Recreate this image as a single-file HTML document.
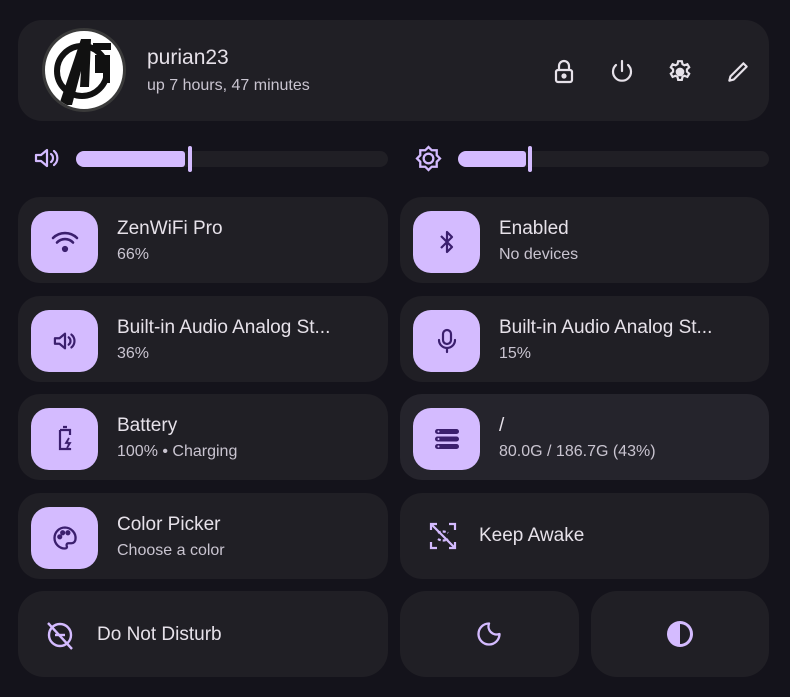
<!DOCTYPE html>
<html><head><meta charset="utf-8"><style>
*{box-sizing:border-box;margin:0;padding:0}
body{width:790px;height:697px;background:#14131b;font-family:"Liberation Sans",sans-serif;position:relative;overflow:hidden}
.card{position:absolute;background:#201f25;border-radius:22px}
.ib{position:absolute;left:13px;top:14px;width:67px;height:62px;background:#d4bbff;border-radius:18px;display:flex;align-items:center;justify-content:center}
.t{position:absolute;left:99px;top:21px;color:#e6e1e9;font-size:19px}
.s{position:absolute;left:99px;top:49px;color:#c9c4d0;font-size:16px}
svg{display:block}
.track{position:absolute;height:16px;background:#201f25;border-radius:8px}
.fill{position:absolute;height:16px;background:#d4bbff;border-radius:8px 3px 3px 8px}
.hd{position:absolute;width:4px;height:26px;background:#d4bbff;border-radius:2px}
</style></head><body>
<div class="card" style="left:18px;top:20px;width:751px;height:101px;border-radius:24px">
  <div style="position:absolute;left:24px;top:8px;width:84px;height:84px;border-radius:50%;background:#fff;border:3px solid #3a3a3a;overflow:hidden">
    <svg width="78" height="78" viewBox="0 0 78 78"><circle cx="37" cy="40" r="25" fill="none" stroke="#111" stroke-width="6"/><path d="M14 74 L36 8 L46 8 L44 56 L35 56 L36 40 L27 74Z" fill="#111"/><path d="M48 12h18v7h-18zM50 24h15v28h-7v-10h-8z" fill="#111"/></svg>
  </div>
  <div style="position:absolute;left:129px;top:26px;color:#e6e1e9;font-size:21px">purian23</div>
  <div style="position:absolute;left:129px;top:57px;color:#c9c4d0;font-size:16px">up 7 hours, 47 minutes</div>
  <svg style="position:absolute;left:535px;top:39px" width="22" height="26" viewBox="0 0 22 26" fill="none" stroke="#e6e1e9" stroke-width="2.2"><rect x="3" y="11" width="16" height="12" rx="2"/><path d="M6 11V7a5 5 0 0 1 10 0v4"/><circle cx="11" cy="17" r="1.5" fill="#e6e1e9"/></svg>
  <svg style="position:absolute;left:591px;top:39px" width="26" height="26" viewBox="0 0 26 26" fill="none" stroke="#e6e1e9" stroke-width="2.2" stroke-linecap="round"><path d="M13 2v10"/><path d="M7 6a9 9 0 1 0 12 0"/></svg>
  <svg style="position:absolute;left:649px;top:39px" width="26" height="26" viewBox="0 0 24 24" fill="none" stroke="#e6e1e9" stroke-width="2"><path d="M10.3 2h3.4l.6 2.8 1.8 1 2.7-1 1.7 2.9-2.1 1.9v2.1l2.1 1.9-1.7 2.9-2.7-1-1.8 1-.6 2.8h-3.4l-.6-2.8-1.8-1-2.7 1-1.7-2.9 2.1-1.9v-2.1L3.5 7.7l1.7-2.9 2.7 1 1.8-1z"/><circle cx="12" cy="12" r="3" fill="#e6e1e9"/></svg>
  <svg style="position:absolute;left:707px;top:39px" width="26" height="26" viewBox="0 0 24 24" fill="none" stroke="#e6e1e9" stroke-width="2" stroke-linejoin="round"><path d="M4 20l1-4L17 4l3 3L8 19z"/></svg>
</div>
<svg style="position:absolute;left:33px;top:146px" width="28" height="24" viewBox="0 0 28 24" fill="none" stroke="#d4bbff" stroke-width="2.2" stroke-linejoin="round" stroke-linecap="round"><path d="M3 9h5l6-5v16l-6-5H3z"/><path d="M18 8a5 5 0 0 1 0 8"/><path d="M21 5a9 9 0 0 1 0 14"/></svg>
<div class="track" style="left:76px;top:151px;width:312px"></div>
<div class="fill" style="left:76px;top:151px;width:109px"></div>
<div class="hd" style="left:188px;top:146px"></div>
<svg style="position:absolute;left:414px;top:144px" width="29" height="29" viewBox="0 0 24 24" fill="none" stroke="#d4bbff" stroke-width="1.9"><path d="M12 2.5l2.7 2.7h4.1v4.1L21.5 12l-2.7 2.7v4.1h-4.1L12 21.5l-2.7-2.7H5.2v-4.1L2.5 12l2.7-2.7V5.2h4.1z"/><circle cx="12" cy="12" r="4"/></svg>
<div class="track" style="left:458px;top:151px;width:311px"></div>
<div class="fill" style="left:458px;top:151px;width:68px"></div>
<div class="hd" style="left:528px;top:146px"></div>

<div class="card" style="left:18px;top:197px;width:370px;height:86px"><div class="ib"><svg width="28" height="24" viewBox="0 0 28 24" fill="none" stroke="#3b1f6e" stroke-width="2.6" stroke-linecap="round"><path d="M2 8a17 17 0 0 1 24 0"/><path d="M6 12.5a11 11 0 0 1 16 0"/><circle cx="14" cy="19" r="1.8" fill="#3b1f6e"/></svg></div><div class="t">ZenWiFi Pro</div><div class="s">66%</div></div>
<div class="card" style="left:400px;top:197px;width:369px;height:86px"><div class="ib"><svg width="20" height="28" viewBox="0 0 20 28" fill="none" stroke="#3b1f6e" stroke-width="2.2" stroke-linejoin="round"><path d="M4 8l11 11-5 5V4l5 5L4 20"/></svg></div><div class="t">Enabled</div><div class="s">No devices</div></div>

<div class="card" style="left:18px;top:296px;width:370px;height:86px"><div class="ib"><svg width="26" height="22" viewBox="0 0 28 24" fill="none" stroke="#3b1f6e" stroke-width="2.4" stroke-linejoin="round" stroke-linecap="round"><path d="M3 9h5l6-5v16l-6-5H3z"/><path d="M18 8a5 5 0 0 1 0 8"/><path d="M21 5a9 9 0 0 1 0 14"/></svg></div><div class="t">Built-in Audio Analog St...</div><div class="s">36%</div></div>
<div class="card" style="left:400px;top:296px;width:369px;height:86px"><div class="ib"><svg width="22" height="28" viewBox="0 0 22 28" fill="none" stroke="#3b1f6e" stroke-width="2.2" stroke-linecap="round"><rect x="7" y="3" width="8" height="14" rx="4"/><path d="M3 13a8 8 0 0 0 16 0M11 21v4"/></svg></div><div class="t">Built-in Audio Analog St...</div><div class="s">15%</div></div>

<div class="card" style="left:18px;top:394px;width:370px;height:86px"><div class="ib"><svg width="20" height="30" viewBox="0 0 20 30" fill="none" stroke="#3b1f6e" stroke-width="2.2"><path d="M8 3h4M5 6h10v5M15 24v1H5V6"/><path d="M14 14l-3 5h4l-3 5" stroke-width="1.8" fill="#3b1f6e"/></svg></div><div class="t">Battery</div><div class="s">100% • Charging</div></div>
<div class="card" style="left:400px;top:394px;width:369px;height:86px;background:#25242c"><div class="ib"><svg width="26" height="24" viewBox="0 0 26 24"><rect x="1" y="2" width="24" height="5" rx="2.5" fill="#3b1f6e"/><rect x="1" y="9.5" width="24" height="5" rx="2.5" fill="#3b1f6e"/><rect x="1" y="17" width="24" height="5" rx="2.5" fill="#3b1f6e"/><circle cx="4.5" cy="4.5" r="1" fill="#d4bbff"/><circle cx="4.5" cy="12" r="1" fill="#d4bbff"/><circle cx="4.5" cy="19.5" r="1" fill="#d4bbff"/></svg></div><div class="t">/</div><div class="s">80.0G / 186.7G (43%)</div></div>

<div class="card" style="left:18px;top:493px;width:370px;height:86px"><div class="ib"><svg width="28" height="28" viewBox="0 0 24 24" fill="none" stroke="#3b1f6e" stroke-width="2"><path d="M12 3a9 9 0 0 0 0 18c1.5 0 2-1 1.5-2s0-2.5 1.5-2.5h2.5A3.5 3.5 0 0 0 21 13 9.5 9 0 0 0 12 3z"/><circle cx="7.5" cy="11" r="1.2" fill="#3b1f6e"/><circle cx="10" cy="7.5" r="1.2" fill="#3b1f6e"/><circle cx="14.5" cy="7.5" r="1.2" fill="#3b1f6e"/></svg></div><div class="t">Color Picker</div><div class="s">Choose a color</div></div>
<div class="card" style="left:400px;top:493px;width:369px;height:86px"><svg style="position:absolute;left:28px;top:28px" width="30" height="30" viewBox="0 0 30 30" fill="none" stroke="#d4bbff" stroke-width="2.2"><path d="M3 9V3h6M21 3h6v6M27 21v6h-6M9 27H3v-6"/><path d="M10 12a7 5 0 0 1 10 0M10 18a7 5 0 0 0 10 0" stroke-dasharray="3 2"/><path d="M4 4l22 22"/></svg><div style="position:absolute;left:79px;top:32px;color:#e6e1e9;font-size:19px">Keep Awake</div></div>

<div class="card" style="left:18px;top:591px;width:370px;height:86px;border-radius:26px"><svg style="position:absolute;left:27px;top:28px" width="30" height="32" viewBox="0 0 30 32" fill="none" stroke="#d4bbff" stroke-width="2.4"><circle cx="15" cy="16" r="11"/><path d="M10 16h10"/><path d="M3 4l24 26"/></svg><div style="position:absolute;left:79px;top:33px;color:#e6e1e9;font-size:19px">Do Not Disturb</div></div>
<div class="card" style="left:400px;top:591px;width:179px;height:86px;border-radius:26px"><svg style="position:absolute;left:75px;top:29px" width="28" height="28" viewBox="0 0 24 24" fill="none" stroke="#d4bbff" stroke-width="2" stroke-linejoin="round"><path d="M12 3a9 9 0 1 0 9 9 7 7 0 0 1-9-9z"/></svg></div>
<div class="card" style="left:591px;top:591px;width:178px;height:86px;border-radius:26px"><svg style="position:absolute;left:74px;top:28px" width="30" height="30" viewBox="0 0 30 30"><circle cx="15" cy="15" r="13" fill="#d4bbff"/><path d="M15 5a10 10 0 0 1 0 20z" fill="#201f25"/></svg></div>
</body></html>
